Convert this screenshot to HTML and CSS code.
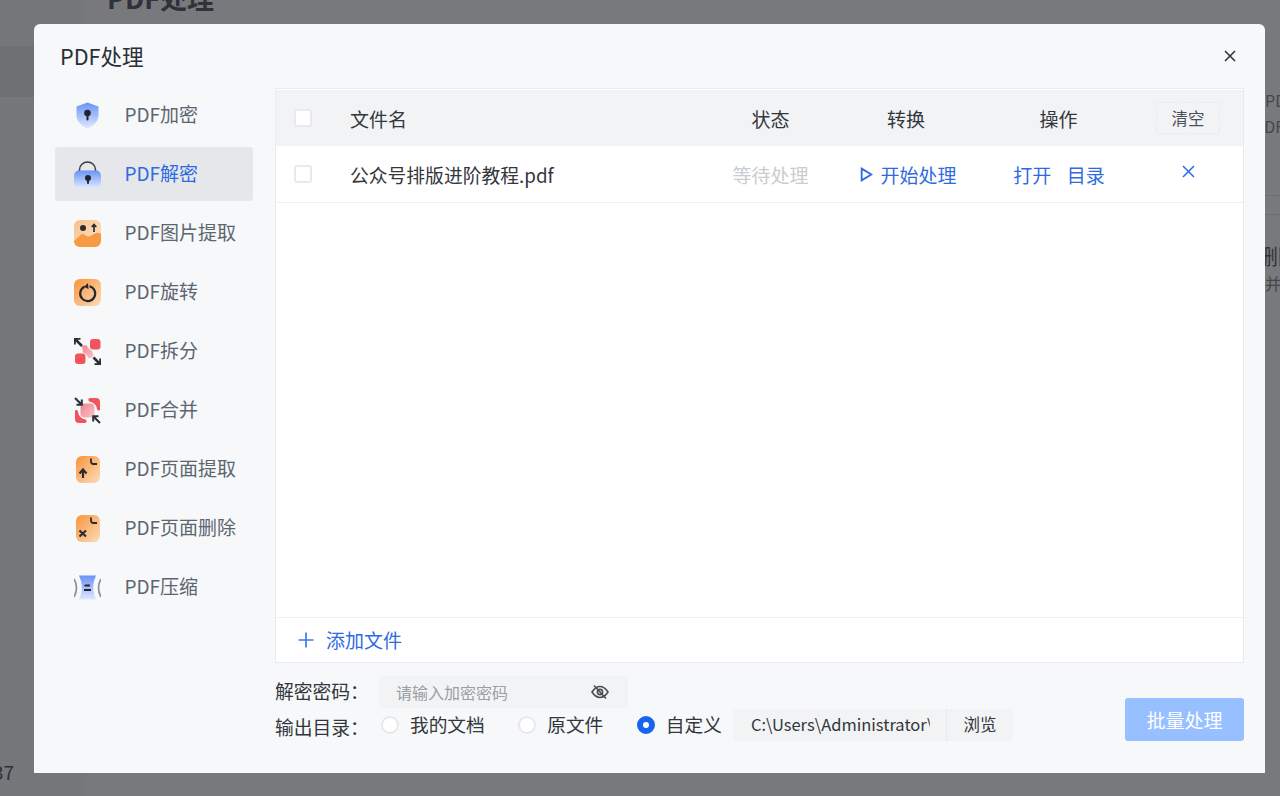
FILE: index.html
```html
<!DOCTYPE html>
<html lang="zh-CN">
<head>
<meta charset="utf-8">
<title>PDF处理</title>
<link rel="stylesheet" href="styles.css">
</head>
<body>
<svg class="defs" aria-hidden="true">
  <defs>
    <linearGradient id="gBlue" x1="0" y1="0" x2="0" y2="1"><stop offset="0" stop-color="#6a92f6"/><stop offset="1" stop-color="#dfe9ff"/></linearGradient>
    <linearGradient id="gPeach" x1="0" y1="0" x2="1" y2="1"><stop offset="0" stop-color="#f8c088"/><stop offset="1" stop-color="#fde6d0"/></linearGradient>
    <linearGradient id="gOrange" x1="0" y1="0" x2="1" y2="1"><stop offset="0" stop-color="#f8943a"/><stop offset="1" stop-color="#fddcbc"/></linearGradient>
    <linearGradient id="gPink" x1="0" y1="0" x2="1" y2="1"><stop offset="0" stop-color="#f0858c"/><stop offset="1" stop-color="#f8c4c8"/></linearGradient>
  </defs>
</svg>

<div class="backdrop">
  <div class="bg-side">
    <div class="bg-band"></div>
    <div class="bg-num">37</div>
  </div>
  <div class="bg-main"><div class="bg-heading">PDF处理</div></div>
  <div class="bg-edge">
    <div class="bg-line1">PDF</div>
    <div class="bg-line2">PDF</div>
    <div class="bg-rule"></div>
    <div class="bg-rule second"></div>
    <div class="bg-line3">删除</div>
    <div class="bg-line4">合并</div>
  </div>
</div>

<div class="modal">
  <div class="modal-head">
    <div class="modal-title">PDF处理</div>
    <svg class="modal-close" viewBox="0 0 12 12"><path d="M1 1l10 10M11 1L1 11"/></svg>
  </div>
  <div class="modal-body">
    <nav class="side">
      <div class="side-item">
        <svg class="ico" viewBox="0 0 27 27"><path d="M13.5 0.500L24.5 4.500V14C24.500 20 18 24.500 13.500 26.500C9 24.500 2.500 20 2.500 14V4.500Z" fill="url(#gBlue)"/><circle cx="13.500" cy="11" r="3.300" fill="#1f2430"/><rect x="12.500" y="12" width="2" height="6.500" rx="1" fill="#1f2430"/></svg>
        <span>PDF加密</span>
      </div>
      <div class="side-item active">
        <svg class="ico" viewBox="0 0 27 27"><path d="M5.500 10V8.500a8 7.500 0 0 1 16 0V10" fill="none" stroke="#3b3f48" stroke-width="1.500"/><rect y="9.500" width="27" height="17.500" rx="5" fill="url(#gBlue)"/><circle cx="14" cy="17" r="3" fill="#1f2430"/><rect x="13" y="17" width="2" height="6" rx="1" fill="#1f2430"/></svg>
        <span>PDF解密</span>
      </div>
      <div class="side-item">
        <svg class="ico" viewBox="0 0 27 27"><rect width="27" height="27" rx="6" fill="url(#gPeach)"/><path d="M0 21L7 14.500C10 12.500 12 17 15 16.500C19 15.500 21 11 27 13.500V21A6 6 0 0 1 21 27H6A6 6 0 0 1 0 21Z" fill="#f79a45"/><circle cx="9" cy="8" r="3" fill="#2b2d33"/><path d="M20 12V5M17.700 7L20 4.500L22.300 7" fill="none" stroke="#2b2d33" stroke-width="1.700"/></svg>
        <span>PDF图片提取</span>
      </div>
      <div class="side-item">
        <svg class="ico" viewBox="0 0 27 27"><rect width="27" height="27" rx="6" fill="url(#gOrange)"/><path d="M10.500 7.800A7.500 7.500 0 1 0 15.500 7.300" fill="none" stroke="#25272c" stroke-width="2.200"/><path d="M14 4L10 7.800L14.500 10Z" fill="#25272c"/></svg>
        <span>PDF旋转</span>
      </div>
      <div class="side-item">
        <svg class="ico" viewBox="0 0 27 27"><rect x="16" y="1" width="10.500" height="10.500" rx="3" fill="#f2535d"/><rect x="1" y="15.500" width="10.500" height="10.500" rx="3" fill="#f2535d"/><path d="M8 8L12.500 7L14.500 10.500L18 13L19.500 16.500L19 19.500L14.500 20L12.500 16.500L9 14.500Z" fill="url(#gPink)"/><path d="M1.500 1.500L8 8M0.500 6.500V0.500H6.500" fill="none" stroke="#2b2e36" stroke-width="2.500"/><path d="M19.500 19.500L26 26M20.500 26.500H26.500V20.500" fill="none" stroke="#2b2e36" stroke-width="2.500"/></svg>
        <span>PDF拆分</span>
      </div>
      <div class="side-item">
        <svg class="ico" viewBox="0 0 27 27"><path d="M16 1H22A4 4 0 0 1 26 5V12C26 14 23.500 14 23 12C22.500 8 20 5.500 15.500 4.500C14 4 14 1 16 1Z" fill="#f2535d"/><path d="M11 26H5A4 4 0 0 1 1 22V14.500C1 12.500 3.500 12.500 4 14.500C4.500 19 7 21.500 11.500 22.500C13 23 13 26 11 26Z" fill="#f2535d"/><rect x="6.500" y="6.500" width="14" height="14" rx="4" fill="url(#gPink)"/><path d="M1 1L7.500 7.500M7.800 2.500V7.800H2.500" fill="none" stroke="#2b2e36" stroke-width="2"/><path d="M26 26L19.500 19.500M19.200 24.500V19.200H24.500" fill="none" stroke="#2b2e36" stroke-width="2"/></svg>
        <span>PDF合并</span>
      </div>
      <div class="side-item">
        <svg class="ico" viewBox="0 0 27 27"><rect x="2" width="24" height="27" rx="6" fill="url(#gOrange)"/><path d="M17 2.500V5.500Q17 8 19.500 8H23" fill="none" stroke="#2b2d33" stroke-width="1.800"/><path d="M9 22V14M5.500 17.500L9 13.500L12.500 17.500" fill="none" stroke="#2b2d33" stroke-width="2.200"/></svg>
        <span>PDF页面提取</span>
      </div>
      <div class="side-item">
        <svg class="ico" viewBox="0 0 27 27"><rect x="2" width="24" height="27" rx="6" fill="url(#gOrange)"/><path d="M17 2.500V5.500Q17 8 19.500 8H23" fill="none" stroke="#2b2d33" stroke-width="1.800"/><path d="M5.500 15.500L12 21.500M12 15.500L5.500 21.500" fill="none" stroke="#2b2d33" stroke-width="2.200"/></svg>
        <span>PDF页面删除</span>
      </div>
      <div class="side-item">
        <svg class="ico" viewBox="0 0 27 27"><path d="M5 1.500H22L20 7C19 11 19 16 20 20L22 25.500H5L7 20C8 16 8 11 7 7Z" fill="url(#gBlue)"/><path d="M10.500 11.500H16M10 16H17" stroke="#23262e" stroke-width="1.800"/><path d="M0 5Q5 13.500 0 23M27 5Q22 13.500 27 23" fill="none" stroke="#8a8d94" stroke-width="1.700"/></svg>
        <span>PDF压缩</span>
      </div>
    </nav>

    <main class="main">
      <section class="table">
        <div class="grid thead">
          <div class="cell-check"><span class="check"></span></div>
          <div class="cell-name">文件名</div>
          <div class="cell-c">状态</div>
          <div class="cell-c">转换</div>
          <div class="cell-c">操作</div>
          <div class="cell-c"><button class="clear" type="button">清空</button></div>
        </div>
        <div class="grid trow">
          <div class="cell-check"><span class="check"></span></div>
          <div class="cell-name">公众号排版进阶教程.pdf</div>
          <div class="cell-c wait">等待处理</div>
          <div class="cell-c link start">
            <svg class="play" viewBox="0 0 12 14"><path d="M1.500 1.500L10.500 7L1.500 12.500Z"/></svg>开始处理
          </div>
          <div class="cell-c link ops"><span>打开</span><span>目录</span></div>
          <div class="cell-c link"><svg class="del" viewBox="0 0 13 13"><path d="M1 1l11 11M12 1L1 12"/></svg></div>
        </div>
        <div class="spacer"></div>
        <div class="add">
          <svg class="plus" viewBox="0 0 16 16"><path d="M8 0.500V15.500M0.500 8H15.500"/></svg>
          <span>添加文件</span>
        </div>
      </section>

      <footer class="foot">
        <div class="opts">
          <div class="opt-row">
            <label class="opt-label">解密密码：</label>
            <div class="pass">
              <span>请输入加密密码</span>
              <svg class="eye" viewBox="0 0 18 16"><path d="M1 8C4 3.500 6.500 2.500 9 2.500S14 3.500 17 8C14 12.500 11.500 13.500 9 13.500S4 12.500 1 8Z"/><circle cx="9" cy="8" r="2.600"/><path d="M3 1.500L15 14.500"/></svg>
            </div>
          </div>
          <div class="opt-row">
            <label class="opt-label low">输出目录：</label>
            <div class="radio-opt first"><span class="radio"></span>我的文档</div>
            <div class="radio-opt"><span class="radio"></span>原文件</div>
            <div class="radio-opt last"><span class="radio on"></span>自定义</div>
            <div class="path">
              <div class="path-text"><div class="path-clip">C:\Users\Administrator\</div></div>
              <div class="browse">浏览</div>
            </div>
          </div>
        </div>
        <button class="batch" type="button">批量处理</button>
      </footer>
    </main>
  </div>
</div>
</body>
</html>
```
FILE: styles.css
```css
* { box-sizing: border-box; }
html, body { margin: 0; height: 796px; overflow: hidden; }
body {
  position: relative;
  background: #78797d;
  font-family: "Noto Sans CJK SC", "Noto Sans", sans-serif;
  color: #33363b;
}
.defs { position: absolute; width: 0; height: 0; }

/* dimmed page behind the dialog */
.backdrop { display: flex; height: 796px; overflow: hidden; color: #2f3238; }
.bg-side { width: 84px; background: #76777b; display: flex; flex-direction: column; padding-top: 46px; overflow: hidden; }
.bg-band { height: 51px; background: #6f7074; }
.bg-num { margin-top: 661px; margin-left: -7px; font-size: 19px; line-height: 28px; }
.bg-main { flex: 1; padding-left: 23px; }
.bg-heading { margin-top: -21px; font-size: 27px; line-height: 38px; font-weight: 700; }
.bg-edge { width: 15px; overflow: hidden; white-space: nowrap; font-size: 16px; color: #45474c; padding-top: 88px; }
.bg-line1 { line-height: 24px; }
.bg-line2 { line-height: 28px; margin-left: -11px; }
.bg-rule { height: 1px; background: #6c6d71; margin-top: 55px; }
.bg-rule.second { margin-top: 18px; }
.bg-line3 { margin-top: 25px; font-size: 21px; line-height: 30px; margin-left: -8px; color: #303238; }
.bg-line4 { margin-top: 1px; line-height: 24px; margin-left: -16px; }

/* dialog */
.modal {
  position: absolute; left: 34px; top: 24px;
  width: 1231px; height: 749px;
  background: #f6f8fa; border-radius: 6px 6px 0 0;
  display: flex; flex-direction: column;
}
.modal-head { height: 64px; display: flex; align-items: center; justify-content: space-between; padding: 3px 29px 3px 26px; flex: none; }
.modal-title { font-size: 21.6px; line-height: 30px; color: #2b2e33; }
.modal-close { width: 12px; height: 12px; fill: none; stroke: #2b2e33; stroke-width: 1.500; }

.modal-body { flex: 1; display: flex; padding: 0 21px 32px; min-height: 0; gap: 22px; }

/* sidebar */
.side { width: 198px; flex: none; display: flex; flex-direction: column; gap: 5px; }
.side-item {
  height: 54px; display: flex; align-items: center; gap: 23.500px;
  padding-left: 19px; border-radius: 3px;
  font-size: 19px; color: #5d6670;
}
.side-item span { padding-bottom: 4px; }
.side-item.active { background: #e5e7ea; color: #2f6ae0; }
.ico { width: 27px; height: 27px; flex: none; }

/* main */
.main { flex: 1; min-width: 0; display: flex; flex-direction: column; }
.table { flex: 1; display: flex; flex-direction: column; background: #fff; border: 1px solid #e8ebef; padding-top: 1px; min-height: 0; }
.grid { display: grid; grid-template-columns: 74px 354px 133px 138px 167px 92px; align-items: center; font-size: 19px; }
.thead { height: 56px; background: #f2f3f5; color: #33363b; flex: none; }
.trow { height: 57px; border-bottom: 1px solid #edeff2; color: #33363b; flex: none; }
.trow .cell-name { font-size: 18.800px; }
.cell-check { padding-left: 18px; display: flex; align-items: center; }
.check { width: 18px; height: 18px; background: #fff; border: 2px solid #e8eaee; border-radius: 3px; }
.cell-c { display: flex; justify-content: center; align-items: center; }
.wait { color: #c9ccd1; }
.link { color: #2f6ae0; }
.start { gap: 7px; padding-left: 5px; }
.play { width: 13px; height: 15px; fill: none; stroke: #2f6ae0; stroke-width: 1.700; margin-top: 1px; }
.ops { gap: 15.500px; padding-left: 1px; }
.del { width: 13px; height: 13px; fill: none; stroke: #2f6ae0; stroke-width: 1.500; margin-top: -5px; }
.clear {
  width: 64px; height: 32px; padding: 0; font: inherit; font-size: 16.500px; color: #4d5259;
  background: #f2f3f5; border: 1px dashed #e6e8eb; border-radius: 3px;
}
.spacer { flex: 1; }
.add { height: 45px; border-top: 1px solid #edeff2; display: flex; align-items: center; gap: 12px; padding-left: 22px; color: #2f6ae0; font-size: 19px; flex: none; }
.add span { padding-bottom: 2px; }
.plus { width: 16px; height: 16px; fill: none; stroke: #3d78f0; stroke-width: 1.700; }

/* footer */
.foot { flex: none; display: flex; justify-content: space-between; align-items: flex-end; padding-top: 13px; }
.opts { display: flex; flex-direction: column; gap: 1px; }
.opt-row { display: flex; align-items: center; height: 32px; font-size: 18.700px; color: #33363b; }
.opt-label { width: 104px; flex: none; font-size: 18.800px; padding-bottom: 4px; }
.opt-label.low { padding: 2px 0 0; }
.pass {
  width: 249px; height: 32px; background: #f1f3f5; border-radius: 3px;
  display: flex; align-items: center; justify-content: space-between;
  padding: 0 19px 0 17px; font-size: 16px; color: #9a9ea5;
}
.eye { width: 18px; height: 16px; fill: none; stroke: #4a4d54; stroke-width: 1.600; }
.radio-opt { display: flex; align-items: center; gap: 11px; margin-right: 33.500px; padding-bottom: 4px; }
.radio-opt.first { margin-left: 2px; }
.radio-opt.last { margin-right: 11px; }
.radio { width: 18px; height: 18px; border-radius: 50%; background: #fff; border: 2px solid #e6e8eb; margin-top: 4px; }
.radio.on { background: #fff; border: 6px solid #1764f0; }
.path { display: flex; height: 32px; background: #f1f3f5; border-radius: 3px; font-size: 16.500px; color: #33363b; align-items: center; }
.path-text { width: 214px; padding: 0 0 2px 18px; height: 32px; line-height: 30px; border-right: 1px solid #e6e8eb; }
.path-clip { width: 179px; overflow: hidden; white-space: nowrap; }
.browse { width: 66px; text-align: center; padding-bottom: 2px; }
.batch {
  width: 119px; height: 43px; padding: 0; background: #98bfff; border: 0; border-radius: 3px;
  color: #fff; font: inherit; font-size: 19px;
}
```
